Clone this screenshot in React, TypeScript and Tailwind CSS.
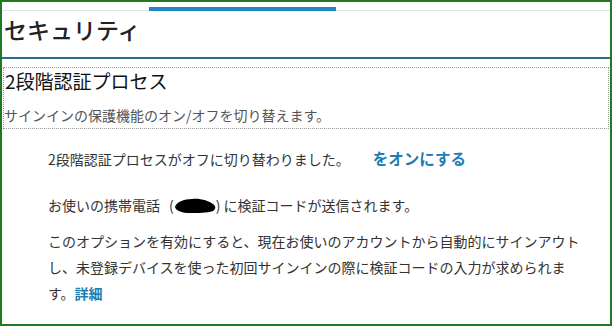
// Security settings panel: two-step verification status
const jp = "font-['Noto_Sans_CJK_JP','Noto_Sans',sans-serif]"

function Blot() {
  return (
    <svg width="42" height="16" viewBox="0 0 42 16" className="inline-block align-[-3px]">
      <path
        d="M1 9 C2 4 10 1 18 1 C26 0 35 3 39 6 C42 8 42 11 39 13 C33 15 24 15 16 15 C9 15 2 13 1 9 Z"
        fill="#000"
      />
    </svg>
  )
}

export default function App() {
  return (
    <div className={`w-[612px] h-[326px] border-2 border-[#1f7a23] bg-white overflow-hidden text-[#333] ${jp}`}>
      {/* top tab indicator */}
      <div className="flex items-end pt-[5px]">
        <div className="w-[147px] h-px bg-[#dfe3ef]" />
        <div className="w-[187px] h-[4px] bg-[#1f87c1]" />
        <div className="flex-1 h-px bg-[#dfe3ef]" />
      </div>

      <h1 className="pt-[2px] pb-[12px] pl-[2px] text-[23px] leading-[32px] font-medium text-[#222]">セキュリティ</h1>
      <div className="h-[2px] bg-[#2c6d8c]" />

      <section className="mt-[8px] mx-px border border-dotted border-[#9a9a9a] pb-[2px]">
        <h2 className="pl-px text-[19px] leading-[26px] text-[#111]">2段階認証プロセス</h2>
        <p className="mt-[10px] text-[14px] leading-[22px] text-[#555]">
          サインインの保護機能のオン/オフを切り替えます。
        </p>
      </section>

      <div className="px-[46px]">
        <p className="mt-[18px] text-[14px] leading-[22px]">
          2段階認証プロセスがオフに切り替わりました。
          <a className="ml-[23px] text-[15.5px] font-semibold text-[#1d7db3]">をオンにする</a>
        </p>
        <p className="mt-[24px] text-[14px] leading-[22px]">
          お使いの携帯電話<span className="ml-[9px]">(</span><Blot />) に検証コードが送信されます。
        </p>
        <div className="mt-[12px] text-[14px] leading-[26px] whitespace-nowrap">
          <p>このオプションを有効にすると、現在お使いのアカウントから自動的にサインアウト</p>
          <p>し、未登録デバイスを使った初回サインインの際に検証コードの入力が求められま</p>
          <p>
            す。<a className="font-semibold text-[#1d7db3]">詳細</a>
          </p>
        </div>
      </div>
    </div>
  )
}
